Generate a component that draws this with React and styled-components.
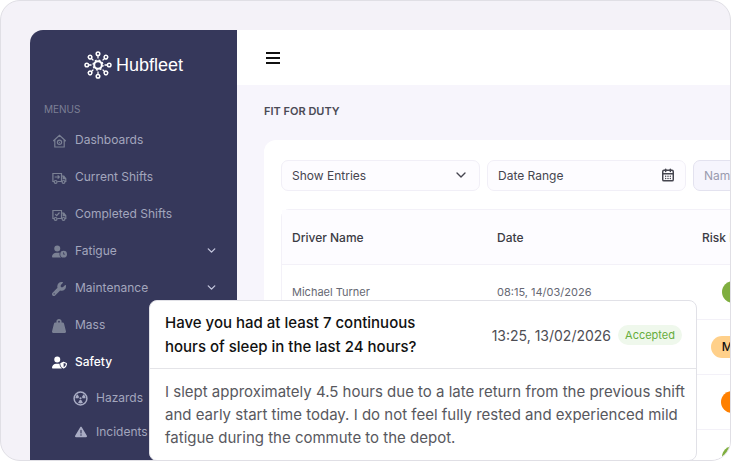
import React from "react";
import styled, { createGlobalStyle } from "styled-components";
import { ChevronDown, CalendarDays } from "lucide-react";
import {
  FaUserClock,
  FaWrench,
  FaWeightHanging,
  FaUserShield,
  FaTriangleExclamation,
} from "react-icons/fa6";

const GlobalStyle = createGlobalStyle`
  * {
    box-sizing: border-box;
  }
  body {
    margin: 0;
    background: #fff;
    font-family: Inter, "Noto Sans", sans-serif;
    font-size: 12px;
  }
  button, input, select {
    font: inherit;
  }
`;

const Page = styled.div`
  height: 100vh;
  padding: 0 1px 1px 0;
`;

const Frame = styled.div`
  position: relative;
  display: flex;
  height: 100%;
  padding: 29px 0 0 29px;
  overflow: hidden;
  background: #f4f2f8;
  border: 1px solid #e0dfe5;
  border-radius: 20px;
`;

const Sidebar = styled.aside`
  flex: 0 0 207px;
  padding: 20px 0 0;
  background: #36385b;
  border-top-left-radius: 13px;
`;

const Logo = styled.a`
  display: flex;
  align-items: center;
  justify-content: center;
  gap: 4px;
  height: 30px;
  color: #fff;
  font-family: "Liberation Sans", Arial, sans-serif;
  font-size: 18px;
  text-decoration: none;
`;

const MenuLabel = styled.p`
  margin: 21px 0 4px 14px;
  color: #7c7f95;
  font-size: 10px;
  line-height: 16px;
`;

const Menu = styled.nav`
  display: flex;
  flex-direction: column;
`;

const MenuItem = styled.a`
  display: grid;
  grid-template-columns: 15px 1fr 12px;
  align-items: center;
  gap: 8px;
  height: 37px;
  padding: 0 20px 0 22px;
  color: ${({ $active }) => ($active ? "#fff" : "#a3a6bd")};
  font-weight: ${({ $active }) => ($active ? 500 : 400)};
  text-decoration: none;

  > svg:first-child {
    color: ${({ $active }) => ($active ? "#fff" : "#7b8194")};
    transform: translateY(1px);
  }
`;

const SubItem = styled(MenuItem)`
  height: 34px;
  padding-left: 43px;

  > svg:first-child {
    justify-self: center;
    color: #a9acc4;
  }
`;

const Main = styled.main`
  flex: 1 0 0;
  min-width: 672px;
  background: #f7f5fc;
`;

const TopBar = styled.header`
  display: flex;
  align-items: center;
  height: 55px;
  padding: 0 29px;
  background: #fff;
`;

const MenuButton = styled.button`
  display: flex;
  flex-direction: column;
  gap: 3px;
  padding: 0;
  border: 0;
  background: none;
`;

const Bar = styled.span`
  width: 14px;
  height: 2px;
  background: #111;
`;

const PageTitle = styled.h1`
  margin: 0;
  padding: 16px 27px 18px;
  color: #4b4a55;
  font-size: 11px;
  font-weight: 600;
  line-height: 21px;
`;

const Panel = styled.section`
  margin-left: 27px;
  min-height: 340px;
  padding: 20px 17px;
  background: #fff;
  border-top-left-radius: 12px;
`;

const Filters = styled.div`
  display: grid;
  grid-template-columns: repeat(3, 199px);
  gap: 7px;
  margin-bottom: 18px;
`;

const Field = styled.label`
  display: flex;
  align-items: center;
  height: 31px;
  padding: 0 10px 1px;
  color: #45454f;
  background: ${({ $tinted }) => ($tinted ? "#f6f5fd" : "#fdfcff")};
  border: 1px solid ${({ $tinted }) => ($tinted ? "#e3e2ef" : "#f1eff7")};
  border-radius: 7px;
`;

const Select = styled.select`
  flex: 1;
  min-width: 0;
  padding: 0;
  color: inherit;
  appearance: none;
  background: none;
  border: 0;
`;

const Input = styled.input`
  flex: 1;
  min-width: 0;
  padding: 0;
  color: inherit;
  background: none;
  border: 0;

  &::placeholder {
    color: ${({ $muted }) => ($muted ? "#9a9baf" : "#45454f")};
    opacity: 1;
  }
`;

const Table = styled.table`
  width: 100%;
  table-layout: fixed;
  border: 1px solid #f3f1f8;
  border-spacing: 0;
  border-radius: 8px 8px 0 0;
`;

const Th = styled.th`
  width: 205px;
  height: 55px;
  padding: 0 10px;
  color: #3b3b44;
  background: #fdfcff;
  border-bottom: 1px solid #f3f1f8;
  font-weight: 500;
  text-align: left;
`;

const Td = styled.td`
  height: 55px;
  padding: 0 10px;
  color: #666873;
  border-bottom: 1px solid #f3f1f8;
  font-size: 11px;
`;

const RiskSlot = styled.div`
  display: flex;
  justify-content: center;
  width: 86px;
`;

const riskColors = {
  Low: "#7fae3f",
  Medium: "#ffd08a",
  High: "#ff8000",
};

const RiskBadge = styled.span`
  padding: 0 11px;
  color: ${({ $level }) => ($level === "Medium" ? "#111" : "#fff")};
  background: ${({ $level }) => riskColors[$level]};
  border-radius: 11px;
  font-size: 12px;
  font-weight: 500;
  line-height: 22px;
`;

const AnswerCard = styled.article`
  position: absolute;
  top: 299px;
  left: 148px;
  right: 33px;
  background: #fff;
  border: 1px solid #e1e1e7;
  border-radius: 8px;
`;

const AnswerHead = styled.header`
  display: flex;
  align-items: center;
  justify-content: space-between;
  padding: 10px 14px 9px 15px;
  border-bottom: 1px solid #e4e4e8;
`;

const Question = styled.h2`
  width: 270px;
  margin: 0;
  color: #111;
  font-size: 15px;
  font-weight: 500;
  line-height: 24px;
`;

const AnswerMeta = styled.div`
  display: flex;
  align-items: center;
  gap: 7px;
  color: #4e4e54;
  font-size: 14px;
`;

const Status = styled.span`
  padding: 0 7px;
  color: #66ad3c;
  background: #eff8ec;
  border-radius: 10px;
  font-size: 11px;
  line-height: 20px;
`;

const Answer = styled.p`
  margin: 0;
  padding: 11px 4px 11px 15px;
  color: #58585e;
  font-size: 15px;
  line-height: 23px;
`;

const spokes = [0, 45, 90, 135, 180, 225, 270, 315];

const HubMark = () => (
  <svg width="28" height="28" viewBox="0 0 28 28" fill="none" stroke="currentColor">
    <circle cx="14" cy="14" r="3.8" strokeWidth="2" />
    <circle cx="14" cy="14" r="5" strokeWidth="1.3" strokeDasharray="1.9 2.03" />
    {spokes.map((angle) => (
      <g key={angle} transform={`rotate(${angle} 14 14)`}>
        <circle cx="14" cy="2.8" r="1.8" strokeWidth="1.5" />
        <path d="M14 4.5v3" strokeWidth="1.3" />
      </g>
    ))}
  </svg>
);

const HomeIcon = () => (
  <svg width="15" height="14" viewBox="0 0 14 14" fill="none" stroke="currentColor" strokeWidth="1.2">
    <path d="M.8 7 7 1.2 13.2 7M2.3 6v7h9.4V6M.8 7h1.5M11.7 7h1.5" />
    <circle cx="7" cy="8.3" r="2.1" />
    <circle cx="7" cy="8.3" r=".6" fill="currentColor" stroke="none" />
  </svg>
);

const TruckIcon = ({ mark }) => (
  <svg width="15" height="14" viewBox="0 0 15 14" fill="none" stroke="currentColor" strokeWidth="1.2">
    <path d="M2 10.5H.9v-8h8.6v8H5.3M9.5 5h2.3l2 2.7v2.8h-.9M9.5 10.5h.6M11.3 5.3v2.4h2.4" />
    <circle cx="3.6" cy="10.9" r="1.4" />
    <circle cx="11.5" cy="10.9" r="1.4" />
    <path d={mark} />
  </svg>
);

const HazardIcon = () => (
  <svg width="15" height="15" viewBox="0 0 15 15" fill="none" stroke="currentColor">
    <circle cx="7.5" cy="7.5" r="6.4" strokeWidth="1.5" />
    <circle cx="7.5" cy="7.3" r="1.1" fill="currentColor" stroke="none" />
    <g fill="currentColor" stroke="none">
      <path d="M4.5 3.3 6.1 5.9 5.3 7.3H2.4A5 5 0 0 1 4.5 3.3Z" />
      <path d="M10.5 3.3 8.9 5.9 9.7 7.3H12.6A5 5 0 0 0 10.5 3.3Z" />
      <path d="M6.7 9h1.6l1.6 2.8a5 5 0 0 1-4.8 0Z" />
    </g>
  </svg>
);

const menu = [
  { label: "Dashboards", icon: <HomeIcon /> },
  { label: "Current Shifts", icon: <TruckIcon mark="M2.7 6h4.6M5.7 4.4 7.3 6 5.7 7.6" /> },
  { label: "Completed Shifts", icon: <TruckIcon mark="M3.2 6.2 4.7 7.7 7.5 4.5" /> },
  { label: "Fatigue", icon: <FaUserClock size={15} />, expandable: true },
  { label: "Maintenance", icon: <FaWrench size={14} />, expandable: true },
  { label: "Mass", icon: <FaWeightHanging size={14} /> },
  { label: "Safety", icon: <FaUserShield size={15} />, active: true },
];

const subMenu = [
  { label: "Hazards", icon: <HazardIcon /> },
  { label: "Incidents", icon: <FaTriangleExclamation size={12} /> },
];

const drivers = [
  { name: "Michael Turner", date: "08:15, 14/03/2026", risk: "Low" },
  { risk: "Medium" },
  { risk: "High" },
  { risk: "Low" },
];

const App = () => {
  return (
    <Page>
      <GlobalStyle />
      <Frame>
        <Sidebar>
          <Logo href="#">
            <HubMark />
            Hubfleet
          </Logo>
          <MenuLabel>MENUS</MenuLabel>
          <Menu>
            {menu.map(({ label, icon, expandable, active }) => (
              <MenuItem key={label} href="#" $active={active}>
                {icon}
                {label}
                {expandable && <ChevronDown size={13} color="#c3c5dc" strokeWidth={2.5} />}
              </MenuItem>
            ))}
            {subMenu.map(({ label, icon }) => (
              <SubItem key={label} href="#">
                {icon}
                {label}
              </SubItem>
            ))}
          </Menu>
        </Sidebar>
        <Main>
          <TopBar>
            <MenuButton aria-label="Toggle menu">
              <Bar />
              <Bar />
              <Bar />
            </MenuButton>
          </TopBar>
          <PageTitle>FIT FOR DUTY</PageTitle>
          <Panel>
            <Filters>
              <Field>
                <Select aria-label="Show entries">
                  <option>Show Entries</option>
                </Select>
                <ChevronDown size={16} />
              </Field>
              <Field>
                <Input aria-label="Date range" placeholder="Date Range" />
                <CalendarDays size={14} strokeWidth={2.5} />
              </Field>
              <Field $tinted>
                <Input aria-label="Name" placeholder="Name" $muted />
              </Field>
            </Filters>
            <Table>
              <thead>
                <tr>
                  <Th>Driver Name</Th>
                  <Th>Date</Th>
                  <Th>Risk Indicator</Th>
                </tr>
              </thead>
              <tbody>
                {drivers.map(({ name, date, risk }, index) => (
                  <tr key={index}>
                    <Td>{name}</Td>
                    <Td>{date}</Td>
                    <Td>
                      <RiskSlot>
                        <RiskBadge $level={risk}>{risk}</RiskBadge>
                      </RiskSlot>
                    </Td>
                  </tr>
                ))}
              </tbody>
            </Table>
          </Panel>
        </Main>
        <AnswerCard>
          <AnswerHead>
            <Question>Have you had at least 7 continuous hours of sleep in the last 24 hours?</Question>
            <AnswerMeta>
              <time>13:25, 13/02/2026</time>
              <Status>Accepted</Status>
            </AnswerMeta>
          </AnswerHead>
          <Answer>
            I slept approximately 4.5 hours due to a late return from the previous shift and early
            start time today. I do not feel fully rested and experienced mild fatigue during the
            commute to the depot.
          </Answer>
        </AnswerCard>
      </Frame>
    </Page>
  );
};

export default App;
